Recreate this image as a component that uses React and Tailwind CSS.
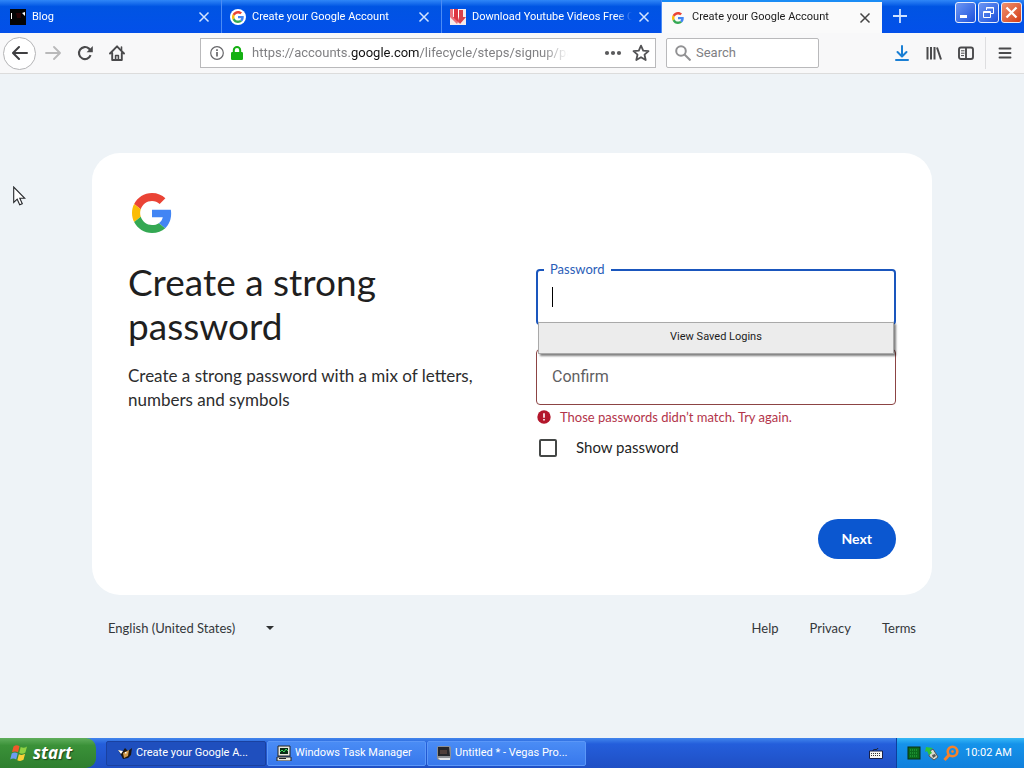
import React from "react";

function GoogleG({ className }) {
  return (
    <svg viewBox="0 0 48 48" className={className} aria-hidden="true">
      <path fill="#ea4335" d="M24 9.5c3.54 0 6.71 1.22 9.21 3.6l6.85-6.85C35.9 2.38 30.47 0 24 0 14.62 0 6.51 5.38 2.56 13.22l7.98 6.19C12.43 13.72 17.74 9.5 24 9.5z" />
      <path fill="#4285f4" d="M46.98 24.55c0-1.57-.15-3.09-.38-4.55H24v9.02h12.94c-.58 2.96-2.26 5.48-4.78 7.18l7.73 6c4.51-4.18 7.09-10.36 7.09-17.65z" />
      <path fill="#fbbc05" d="M10.53 28.59c-.48-1.45-.76-2.99-.76-4.59s.27-3.14.76-4.59l-7.98-6.19C.92 16.46 0 20.12 0 24c0 3.88.92 7.54 2.56 10.78l7.97-6.19z" />
      <path fill="#34a853" d="M24 48c6.48 0 11.93-2.13 15.89-5.81l-7.73-6c-2.15 1.45-4.92 2.3-8.16 2.3-6.26 0-11.57-4.22-13.47-9.91l-7.98 6.19C6.51 42.62 14.62 48 24 48z" />
    </svg>
  );
}

function CloseX({ className }) {
  return (
    <svg viewBox="0 0 12 12" className={className} fill="none" stroke="currentColor" strokeWidth="1.5" aria-hidden="true">
      <path d="M1.5 1.5l9 9M10.5 1.5l-9 9" />
    </svg>
  );
}

function BlogIcon() {
  return (
    <svg viewBox="0 0 16 16" className="size-4 shrink-0" aria-hidden="true">
      <rect width="16" height="16" fill="#050505" />
      <path d="M1 4h1v6H1zM12 4l3-1v4z" fill="#fff" />
      <path d="M6 4h5v5H7z" fill="#2a0406" />
    </svg>
  );
}

function DownloadSiteIcon() {
  return (
    <svg viewBox="0 0 16 16" className="size-4 shrink-0" aria-hidden="true">
      <rect width="16" height="16" fill="#f6eaec" />
      <path d="M0 0h3v8h2l3 5-1 2-7-7z" fill="#e9707a" />
      <path d="M4 0h4v8l1 6-6-6h1z" fill="#dd3440" />
      <path d="M9 1h4v7h3l-6 7-2-3 1-3z" fill="#d9404b" />
      <path d="M8 0h1v8H8zM3 0h1v5H3z" fill="#fff" />
    </svg>
  );
}

function Tab({ icon, title, active }) {
  return (
    <div
      className={
        active
          ? "flex h-[33px] w-[220px] min-w-0 items-center border-t-2 border-[#1a8cf5] bg-[#fafafa] pr-[9px] pl-2 text-[#1b1b1b]"
          : "flex h-[33px] w-[220px] min-w-0 items-center border-r border-[#4b8cf5] pt-px pr-[9px] pl-2 text-white"
      }
    >
      {icon}
      <button type="button" className="ml-1.5 min-w-0 flex-1 overflow-hidden mask-r-from-90% mask-r-to-100% text-left text-[11px] whitespace-nowrap">
        {title}
      </button>
      <button type="button" aria-label="Close tab" className="ml-1 flex size-4 shrink-0 items-center justify-center">
        <CloseX className={active ? "size-3 text-[#444]" : "size-3 text-[#d3e5ff]"} />
      </button>
    </div>
  );
}

function WindowButtons() {
  const base = "flex size-[21px] items-center justify-center rounded-[3px] border border-[#e8eefc]";
  return (
    <div className="flex gap-0.5 pt-[2px] pr-0.5">
      <button type="button" aria-label="Minimize" className={base + " bg-gradient-to-br from-[#6d96f3] to-[#1c4fdb]"}>
        <svg viewBox="0 0 19 19" className="size-[19px]"><path d="M4 12h7v3H4z" fill="#fff" /></svg>
      </button>
      <button type="button" aria-label="Restore" className={base + " bg-gradient-to-br from-[#6d96f3] to-[#1c4fdb]"}>
        <svg viewBox="0 0 19 19" className="size-[19px]" fill="none" stroke="#fff">
          <path d="M7.5 7V4.5h7v6H12M7 5h8" />
          <path d="M4.5 8.5h7v6h-7zM4 9.5h8" />
        </svg>
      </button>
      <button type="button" aria-label="Close" className={base + " bg-gradient-to-br from-[#f0906c] to-[#d23a10]"}>
        <svg viewBox="0 0 19 19" className="size-[19px]" fill="none" stroke="#fff" strokeWidth="2.3">
          <path d="M4.5 4.5l10 10M14.5 4.5l-10 10" />
        </svg>
      </button>
    </div>
  );
}

function TabStrip() {
  return (
    <header className="flex h-[33px] items-start bg-gradient-to-b from-[#2f86f7] via-[#0054e3] via-20% to-[#0350ea] pl-0.5">
      <div className="flex min-w-0">
        <Tab icon={<BlogIcon />} title="Blog" />
        <Tab
          icon={
            <span className="flex size-4 shrink-0 items-center justify-center rounded-full bg-white">
              <GoogleG className="size-3" />
            </span>
          }
          title="Create your Google Account"
        />
        <Tab icon={<DownloadSiteIcon />} title="Download Youtube Videos Free C" />
        <Tab
          active
          icon={
            <span className="flex size-4 shrink-0 items-center justify-center">
              <GoogleG className="size-3" />
            </span>
          }
          title="Create your Google Account"
        />
      </div>
      <button type="button" aria-label="New tab" className="flex h-8 w-9 items-center justify-center text-[#cfe2ff]">
        <svg viewBox="0 0 14 14" className="size-3.5" stroke="currentColor" strokeWidth="1.8"><path d="M7 0v14M0 7h14" /></svg>
      </button>
      <div className="flex-1" />
      <WindowButtons />
    </header>
  );
}

function ToolButton({ label, children }) {
  return (
    <button type="button" aria-label={label} className="flex size-8 items-center justify-center text-[#4a4a4c]">
      {children}
    </button>
  );
}

function Toolbar() {
  return (
    <nav className="flex h-[41px] items-center border-b border-[#dcdcdc] bg-[#f8f8f9]">
      <div className="flex w-[200px] shrink-0 items-center pl-[3px]">
        <button
          type="button"
          aria-label="Back"
          className="mr-px flex size-[33px] items-center justify-center rounded-full border border-[#b4b4b6] bg-white text-[#3f3f41]"
        >
          <svg viewBox="0 0 16 16" className="size-4" fill="none" stroke="currentColor" strokeWidth="2" strokeLinecap="round" strokeLinejoin="round">
            <path d="M15 8H1.5M7 2L1 8l6 6" />
          </svg>
        </button>
        <button type="button" aria-label="Forward" className="flex size-8 items-center justify-center text-[#b9b9ba]">
          <svg viewBox="0 0 16 16" className="size-4" fill="none" stroke="currentColor" strokeWidth="1.8" strokeLinecap="round" strokeLinejoin="round">
            <path d="M1 8h13.5M9 2l6 6-6 6" />
          </svg>
        </button>
        <ToolButton label="Reload">
          <svg viewBox="0 0 16 16" className="size-4" fill="none" stroke="currentColor" strokeWidth="2.1">
            <path d="M13.6 10.2A6 6 0 1 1 12 3.6L14 6" />
            <path d="M15.8 1v6.2H9.6z" fill="currentColor" stroke="none" />
          </svg>
        </ToolButton>
        <ToolButton label="Home">
          <svg viewBox="0 0 16 16" className="size-4" fill="none" stroke="currentColor" strokeWidth="1.9" strokeLinejoin="round" strokeLinecap="round">
            <path d="M1 8.5L8 1.3l7 7.2M3.2 8v7h9.6V8" />
            <path d="M6.6 15v-4.5h2.8V15M12.5 2v3" strokeWidth="1.6" />
          </svg>
        </ToolButton>
      </div>

      <div className="flex h-[30px] min-w-0 flex-1 items-center border border-[#b9b9bb] bg-white pr-[5px] pl-[9px]">
        <svg viewBox="0 0 14 14" className="size-3.5 shrink-0" fill="none" stroke="#67676a" aria-hidden="true">
          <circle cx="7" cy="7" r="6.3" strokeWidth="1.2" />
          <path d="M7 6v4.5M7 3.3v1.6" strokeWidth="1.7" />
        </svg>
        <svg viewBox="0 0 14 14" className="ml-1.5 size-3.5 shrink-0" fill="none" aria-hidden="true">
          <path d="M3.8 7V4.3a3.2 3.2 0 0 1 6.4 0V7" stroke="#14b012" strokeWidth="2" />
          <rect x="1" y="6" width="12" height="8" rx="1.2" fill="#14b012" />
        </svg>
        <a
          href="#address"
          className="ml-2 min-w-0 flex-1 overflow-hidden mask-r-from-92% mask-r-to-100% text-[13px] whitespace-nowrap text-[#808083]"
        >
          https://accounts.<span className="text-[#111]">google.com</span>/lifecycle/steps/signup/pa
        </a>
        <button type="button" aria-label="Page actions" className="ml-9 shrink-0 text-[#5a5a5c]">
          <svg viewBox="0 0 18 6" className="h-1.5 w-[18px]" fill="currentColor">
            <circle cx="3" cy="3" r="2.1" /><circle cx="9" cy="3" r="2.1" /><circle cx="15" cy="3" r="2.1" />
          </svg>
        </button>
        <button type="button" aria-label="Bookmark" className="ml-2.5 shrink-0 text-[#525254]">
          <svg viewBox="0 0 18 18" className="size-[18px]" fill="none" stroke="currentColor" strokeWidth="1.8" strokeLinejoin="round">
            <path d="M9 1.6l2.2 5 5.3.5-4 3.6 1.2 5.3L9 13.2 4.3 16l1.2-5.3-4-3.6 5.300-.5z" />
          </svg>
        </button>
      </div>

      <label className="ml-2.5 flex h-[30px] w-[153px] items-center rounded-[2px] border border-[#b9b9bb] bg-white pl-2">
        <svg viewBox="0 0 16 16" className="size-4 shrink-0" fill="none" stroke="#919193" strokeWidth="2" aria-hidden="true">
          <circle cx="6" cy="6" r="4.8" /><path d="M9.5 9.5l6 6" />
        </svg>
        <input
          type="search"
          aria-label="Search"
          placeholder="Search"
          className="ml-[5px] w-full min-w-0 bg-transparent text-[13px] outline-none placeholder:text-[#808083]"
        />
      </label>

      <div className="flex w-[205px] shrink-0 items-center justify-end pr-[3px]">
        <button type="button" aria-label="Downloads" className="flex size-8 items-center justify-center text-[#1a7fd4]">
          <svg viewBox="0 0 16 16" className="size-4" fill="none" stroke="currentColor" strokeWidth="2" strokeLinecap="round" strokeLinejoin="round">
            <path d="M8 1v10M3.5 7L8 11.5 12.5 7M2 15h12" />
          </svg>
        </button>
        <ToolButton label="Library">
          <svg viewBox="0 0 16 16" className="size-4" fill="none" stroke="currentColor" strokeWidth="2">
            <path d="M1.5 2v12.5M5 2v12.5M8.5 2v12.5M11 2.5l4 12" />
          </svg>
        </ToolButton>
        <ToolButton label="Sidebars">
          <svg viewBox="0 0 16 16" className="size-4" fill="none" stroke="currentColor" strokeWidth="1.9">
            <rect x="1" y="2.5" width="14" height="11.5" rx="2" />
            <path d="M8 2.5V14" />
            <path d="M3 5.8h3.5M3 8.2h3.5M3 10.6h3" strokeWidth="1" />
          </svg>
        </ToolButton>
        <span className="mx-[3px] h-8 w-px bg-[#dedee0]" />
        <ToolButton label="Menu">
          <svg viewBox="0 0 16 16" className="size-4" fill="none" stroke="currentColor" strokeWidth="1.9" strokeLinecap="round">
            <path d="M2.5 3.5h11M2.5 8h11M2.5 12.5h11" />
          </svg>
        </ToolButton>
      </div>
    </nav>
  );
}

function SignupCard() {
  return (
    <section className="rounded-[28px] bg-white p-9">
      <GoogleG className="mt-1 ml-1 size-10" />
      <div className="mt-[27px] grid grid-cols-2 gap-12">
        <div>
          <h1 className="text-[37px] leading-[44px] text-[#1f1f1f]">Create a strong password</h1>
          <p className="mt-4 text-[17px] leading-6 text-[#2c2d2e]">
            Create a strong password with a mix of letters, numbers and symbols
          </p>
        </div>

        <form className="pt-[9px]" onSubmit={(e) => e.preventDefault()}>
          <div className="relative">
            <input
              id="password"
              type="password"
              className="block h-14 w-full rounded-[4px] border-2 border-[#1a56bd] px-3.5 text-[17px] outline-none"
            />
            <label htmlFor="password" className="absolute -top-2 left-2 bg-white px-1.5 text-[13px] leading-4 text-[#2a5db8]">
              Password
            </label>
            <span className="absolute top-[18px] left-4 h-5 w-px bg-black" aria-hidden="true" />
            <button
              type="button"
              className="absolute top-[53px] right-0.5 left-0.5 z-10 h-8 border border-[#a9a9a9] bg-[#ececec] font-['Roboto','DejaVu_Sans',sans-serif] text-[11px] text-[#1c1c1c] shadow-[2px_2px_2px_rgba(0,0,0,0.5)]"
            >
              View Saved Logins
            </button>
          </div>
          <input
            type="password"
            aria-label="Confirm"
            placeholder="Confirm"
            aria-describedby="mismatch"
            className="mt-6 block h-14 w-full rounded-[4px] border border-[#8c4444] px-[15px] font-['Roboto',sans-serif] text-[16px] outline-none placeholder:text-[#5f6062]"
          />
          <p id="mismatch" className="mt-1 flex h-4 items-center gap-2 text-[13px] leading-4 text-[#b3344a]">
            <svg viewBox="0 0 16 16" className="size-4 shrink-0" aria-hidden="true">
              <circle cx="8" cy="8" r="6.7" fill="#b3162b" />
              <path d="M7.2 4.3h1.6v4.5H7.2zM7.2 10h1.6v1.6H7.2z" fill="#fff" />
            </svg>
            Those passwords didn’t match. Try again.
          </p>
          <label className="mt-3.5 flex h-[18px] items-center gap-[19px] pl-[3px] text-[15px] text-[#1f1f1f]">
            <input type="checkbox" className="size-[18px] appearance-none rounded-[2px] border-2 border-[#444746] bg-white" />
            Show password
          </label>
          <div className="mt-[62px] flex justify-end">
            <button type="submit" className="h-10 rounded-full bg-[#0b57d0] px-6 text-[14px] font-bold text-white">
              Next
            </button>
          </div>
        </form>
      </div>
    </section>
  );
}

function PageFooter() {
  return (
    <footer className="mt-[21px] flex items-center justify-between px-4 text-[13px] leading-6 text-[#34373a]">
      <div className="grid w-[168px] items-center">
        <select
          aria-label="Language"
          defaultValue="en-US"
          className="col-start-1 row-start-1 w-full appearance-none bg-transparent outline-none"
        >
          <option value="en-US">English (United States)</option>
        </select>
        <svg viewBox="0 0 8 4" className="pointer-events-none col-start-1 row-start-1 mr-0.5 h-1 w-2 justify-self-end" aria-hidden="true">
          <path d="M0 0h8L4 4z" fill="#2f3133" />
        </svg>
      </div>
      <div className="flex gap-[31px]">
        <a href="#help">Help</a>
        <a href="#privacy">Privacy</a>
        <a href="#terms">Terms</a>
      </div>
    </footer>
  );
}

function TaskButton({ icon, label, active }) {
  return (
    <button
      type="button"
      className={
        active
          ? "flex h-[25px] w-40 items-center gap-[3px] rounded-[2px] border border-[#1a41a0] bg-[#1f4fbe] pl-2.5 text-[11px] whitespace-nowrap text-white"
          : "flex h-[25px] w-[159px] items-center gap-[3px] rounded-[2px] border border-[#5b97f8] bg-gradient-to-b from-[#4a8cf5] to-[#3878ec] pl-2 text-[11px] whitespace-nowrap text-white"
      }
    >
      {icon}
      {label}
    </button>
  );
}

function Taskbar() {
  return (
    <footer className="flex h-[30px] items-center bg-gradient-to-b from-[#4285ec] via-[#245edb] via-20% to-[#1f4fc4]">
      <button
        type="button"
        className="mr-2.5 flex h-[30px] w-24 items-center gap-[3px] rounded-r-[10px] bg-gradient-to-b from-[#5fae5c] via-[#3a9138] via-25% to-[#2f7f2f] pl-2.5 font-['Open_Sans',sans-serif] text-[17px] font-bold text-white italic text-shadow-[1px_1px_1px_rgba(0,0,0,0.5)]"
      >
        <svg viewBox="0 0 20 20" className="size-5 shrink-0" aria-hidden="true">
          <path d="M3.5 3.5C5.5 2 7.5 2 9.5 3.2L8 9.3c-2-1.2-4-1.2-6 0z" fill="#f0592b" />
          <path d="M10.7 4c2 1 4 1 6.3-.5l-1.6 6c-2.2 1.5-4.2 1.5-6.2.5z" fill="#8fd143" />
          <path d="M1.7 10.6c2-1.3 4-1.3 6-.1l-1.5 6c-2-1.2-4-1.2-6 0z" fill="#6d9cf0" />
          <path d="M8.9 11.2c2 1.1 4 1 6.2-.4l-1.6 6c-2.2 1.4-4.2 1.5-6.2.4z" fill="#fbd037" />
        </svg>
        start
      </button>
      <div className="flex gap-px">
        <TaskButton
          active
          label="Create your Google A..."
          icon={
            <svg viewBox="0 0 16 16" className="size-4 shrink-0" aria-hidden="true">
              <path d="M1 5l5 1 2-3 3 3 4-3-1 7-3 3-5 1-2-4z" fill="#1d1712" />
              <path d="M6 8l6-3-1 6-4 2z" fill="#d29a49" />
              <path d="M1 5l5 1-2 3zM8 7h1.5v1.5H8z" fill="#fff" />
            </svg>
          }
        />
        <TaskButton
          label="Windows Task Manager"
          icon={
            <svg viewBox="0 0 16 16" className="size-4 shrink-0" aria-hidden="true">
              <path d="M2 1h12v10H2zM1 12h14v4H1z" fill="#e8e8df" stroke="#222" />
              <path d="M4 3h8v6H4z" fill="#0a2a14" />
              <path d="M4 7l2-2 2 2 2-3 2 2" fill="none" stroke="#3ce05d" />
              <path d="M3 13.5h7" stroke="#222" />
            </svg>
          }
        />
        <TaskButton
          label="Untitled * - Vegas Pro..."
          icon={
            <svg viewBox="0 0 16 16" className="size-4 shrink-0" aria-hidden="true">
              <rect x="1" y="1" width="14" height="14" rx="2" fill="#8c8f94" />
              <path d="M2 2h11l1 9H2z" fill="#25262b" />
              <path d="M4 6h7M4 8h7" stroke="#77544a" />
              <path d="M2 13h12v2H4z" fill="#e4e6ea" />
            </svg>
          }
        />
      </div>
      <div className="flex-1" />
      <svg viewBox="0 0 14 12" className="mr-[13px] h-3 w-3.5 shrink-0" aria-label="Keyboard">
        <path d="M4 4c0-3 4 0 5-3" fill="none" stroke="#1b1b1b" />
        <path d="M.5 4h13v7.5H.5z" fill="#f8f8f4" stroke="#17204a" />
        <path d="M2 6.5h10M2 8.5h10" stroke="#333" strokeDasharray="1 1" />
      </svg>
      <div className="flex h-[30px] w-32 items-center gap-[3px] border-l border-[#0d3f9d] bg-gradient-to-b from-[#35b8f6] via-[#1593ea] via-20% to-[#1180dc] pl-2.5 text-white">
        <svg viewBox="0 0 14 14" className="size-3.5 shrink-0" aria-hidden="true">
          <rect x="1" y="1" width="12" height="12" fill="#0b6b1c" stroke="#0a2e12" />
          <path d="M3 4h8M3 7h8M3 10h8" stroke="#2fb446" strokeDasharray="1 1" />
        </svg>
        <svg viewBox="0 0 16 16" className="size-4 shrink-0" aria-hidden="true">
          <path d="M6 6l3-2 5 8-4 3-5-4z" fill="#d8dccf" stroke="#555" />
          <path d="M2 2l7 1-3 2 2 3-3 2-2-4-2 1z" fill="#2fc33b" />
          <path d="M8 10l3-1 1 2-3 2z" fill="#555" />
        </svg>
        <svg viewBox="0 0 16 16" className="size-4 shrink-0" fill="none" stroke="#f5822b" aria-hidden="true">
          <circle cx="9.5" cy="6.5" r="4.8" strokeWidth="2.6" />
          <path d="M6 10l-4.5 5" strokeWidth="3" />
          <circle cx="9.5" cy="6.5" r="1" fill="#f5822b" />
        </svg>
        <time className="ml-[3px] text-[11px] whitespace-nowrap">10:02 AM</time>
      </div>
    </footer>
  );
}

function Pointer() {
  return (
    <svg viewBox="0 0 13 20" className="pointer-events-none absolute top-28 left-[13px] h-5 w-[13px]" aria-hidden="true">
      <path d="M.7 1v15.5l3.5-3.3 2.5 5.6 2.6-1.1-2.5-5.4h5z" fill="#fff" stroke="#26282c" strokeWidth="1.1" />
    </svg>
  );
}

export default function App() {
  return (
    <div className="flex min-h-screen flex-col font-['Roboto','DejaVu_Sans',sans-serif]">
      <TabStrip />
      <Toolbar />
      <main className="relative flex flex-1 flex-col justify-center bg-[#eef3f7] pb-5 font-['Lato',sans-serif]">
        <Pointer />
        <div className="mx-auto w-full max-w-[840px]">
          <SignupCard />
          <PageFooter />
        </div>
      </main>
      <Taskbar />
    </div>
  );
}
